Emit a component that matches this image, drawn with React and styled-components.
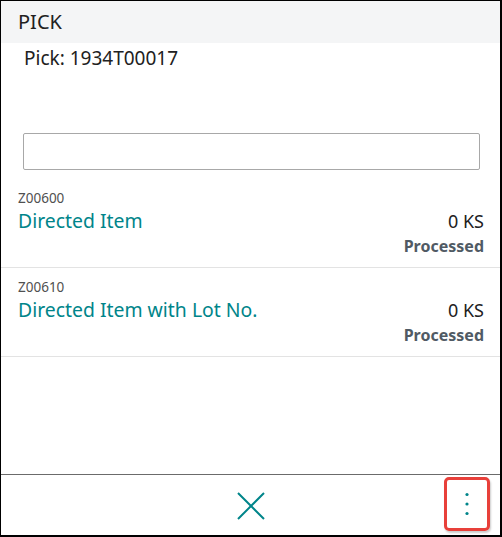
import styled, { createGlobalStyle } from 'styled-components';

const GlobalStyle = createGlobalStyle`
	html, body {
		margin: 0;
		padding: 0;
		background: #fff;
	}
	body {
		font-family: 'Segoe UI', 'Noto Sans', 'Open Sans', sans-serif;
	}
`;

const lines = [
	{ no: 'Z00600', name: 'Directed Item', qty: '0 KS', status: 'Processed' },
	{ no: 'Z00610', name: 'Directed Item with Lot No.', qty: '0 KS', status: 'Processed' },
];

const CloseIcon = () => (
	<svg width='28' height='28' viewBox='0 0 28 28'>
		<path d='M1 1 L27 27 M27 1 L1 27' stroke='#00858a' strokeWidth='2' fill='none' />
	</svg>
);

const MoreIcon = () => (
	<svg width='4' height='24' viewBox='0 0 4 24'>
		<circle cx='2' cy='2.5' r='1.6' fill='#00858a' />
		<circle cx='2' cy='12' r='1.6' fill='#00858a' />
		<circle cx='2' cy='21.5' r='1.6' fill='#00858a' />
	</svg>
);

const App = () => {
	return (
		<>
			<GlobalStyle />
			<Frame>
				<Header>PICK</Header>
				<Body>
					<DocNo>Pick: 1934T00017</DocNo>
					<ScanInput type='text' />
					<List>
						{lines.map((line) => (
							<Row key={line.no}>
								<ItemNo>{line.no}</ItemNo>
								<Line>
									<ItemName>{line.name}</ItemName>
									<Qty>{line.qty}</Qty>
								</Line>
								<Status>{line.status}</Status>
							</Row>
						))}
					</List>
				</Body>
				<Footer>
					<IconButton>
						<CloseIcon />
					</IconButton>
					<MoreButton>
						<MoreIcon />
					</MoreButton>
				</Footer>
			</Frame>
		</>
	);
};

export default App;

const Frame = styled.div`
	box-sizing: border-box;
	width: 502px;
	height: 537px;
	border-style: solid;
	border-color: #000;
	border-width: 1px 2px 2px 1px;
	display: flex;
	flex-direction: column;
	overflow: hidden;
`;

const Header = styled.div`
	height: 42px;
	background: #f4f5f6;
	color: #212121;
	font-size: 20px;
	line-height: 42px;
	padding-left: 17px;
`;

const Body = styled.div`
	flex: 1;
	display: flex;
	flex-direction: column;
`;

const DocNo = styled.div`
	color: #212121;
	font-size: 19px;
	line-height: 24px;
	padding: 3px 0 0 23px;
`;

const ScanInput = styled.input`
	box-sizing: border-box;
	margin: 63px 0 0 22px;
	width: 457px;
	height: 37px;
	border: 1px solid #a8a8a8;
	border-radius: 2px;
	outline: none;
`;

const List = styled.div`
	margin-top: 9px;
	display: flex;
	flex-direction: column;
`;

const Row = styled.div`
	padding: 10px 16px 10px 17px;
	border-bottom: 1px solid #e3e3e3;
	display: flex;
	flex-direction: column;
`;

const ItemNo = styled.div`
	color: #505050;
	font-size: 13.5px;
	line-height: 18px;
`;

const Line = styled.div`
	display: flex;
	justify-content: space-between;
	align-items: baseline;
`;

const ItemName = styled.div`
	color: #00858a;
	font-size: 19.4px;
	line-height: 28px;
`;

const Qty = styled.div`
	color: #212121;
	font-size: 18px;
	line-height: 28px;
`;

const Status = styled.div`
	align-self: flex-end;
	color: #505a64;
	font-size: 16px;
	font-weight: 700;
	line-height: 22px;
`;

const Footer = styled.div`
	height: 60px;
	border-top: 1px solid #6b6b6b;
	display: grid;
	grid-template-columns: 1fr auto 1fr;
	align-items: center;
`;

const IconButton = styled.div`
	grid-column: 2;
	display: flex;
	align-items: center;
	justify-content: center;
	padding-top: 2px;
`;

const MoreButton = styled.div`
	grid-column: 3;
	justify-self: end;
	margin-right: 10px;
	margin-top: -3px;
	box-sizing: border-box;
	width: 46px;
	height: 54px;
	border: 3px solid #e8403a;
	border-radius: 5px;
	box-shadow: 1px 2px 2px rgba(0, 0, 0, 0.2);
	display: flex;
	align-items: center;
	justify-content: center;
`;
